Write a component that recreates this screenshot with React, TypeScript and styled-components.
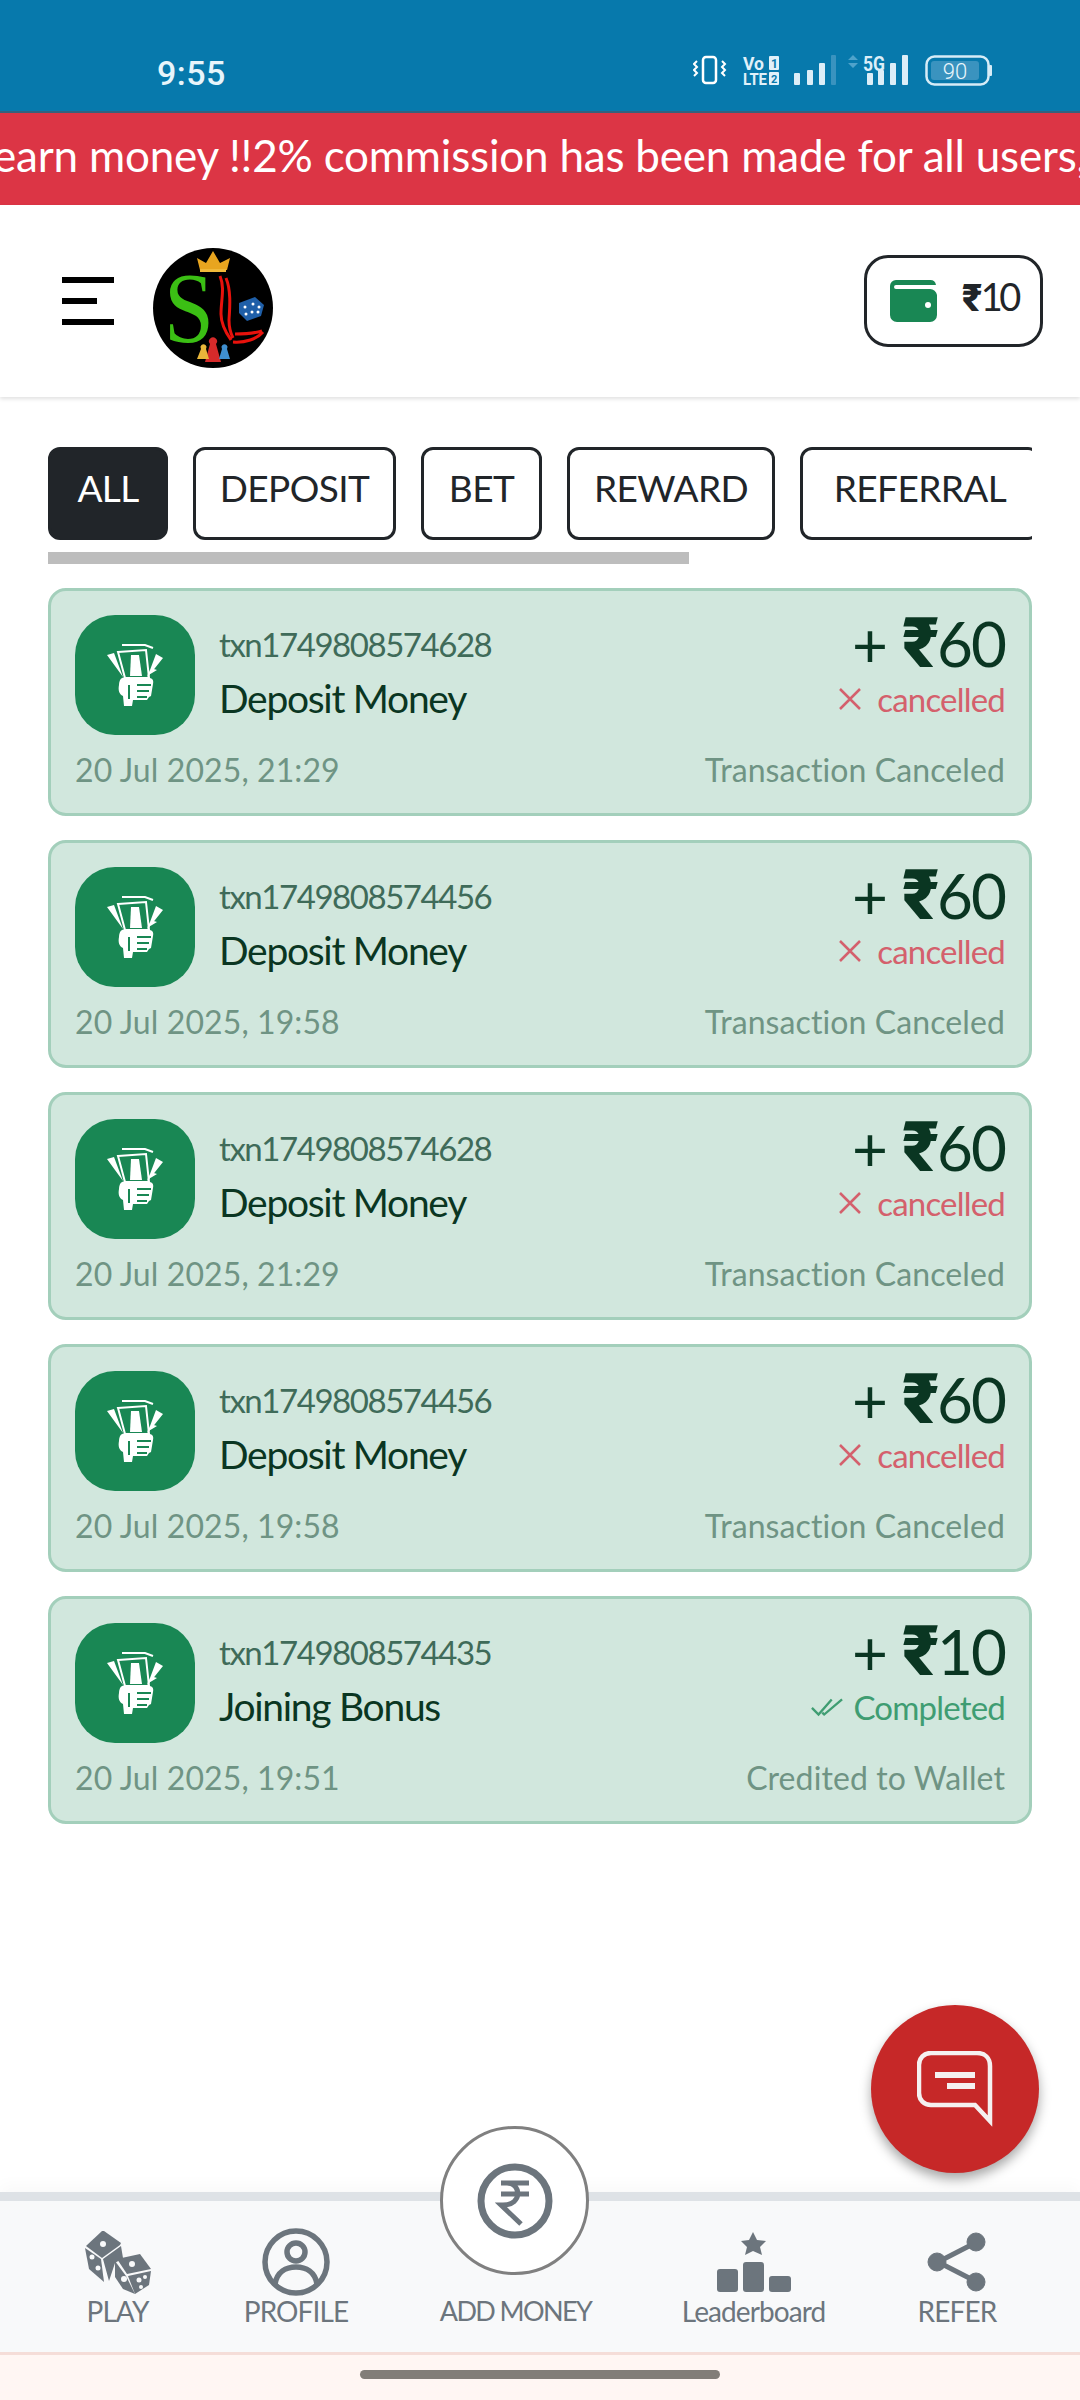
import React from 'react';
import styled, { createGlobalStyle } from 'styled-components';

const Global = createGlobalStyle`
  html, body { margin: 0; padding: 0; background: #fff; }
  * { box-sizing: border-box; }
  body { font-family: "Lato", "Liberation Sans", sans-serif; font-weight: 300; }
`;

const Page = styled.div`
  width: 1080px; height: 2400px; display: flex; flex-direction: column; position: relative; overflow: hidden; background: #fff;
`;
const StatusBar = styled.div`
  height: 113px; flex: none; background: #0779ac; display: flex; justify-content: space-between; align-items: flex-start;
  padding: 53px 87px 0 157px; color: #e8f5fb; box-shadow: inset 0 -2px 0 #35617c;
`;
const Clock = styled.span`
  font-family: "Roboto", sans-serif; font-weight: 500; font-size: 34px; line-height: 40px; letter-spacing: 0.5px;
`;
const Ticker = styled.div`
  height: 92px; flex: none; background: #dc3545; color: #fff; overflow: hidden; display: flex; align-items: center;
  font-size: 44px; font-weight: 400; white-space: nowrap; padding-bottom: 9px;
`;
const TickerText = styled.span`
  margin-left: -7px; letter-spacing: -0.2px;
`;
const Header = styled.header`
  height: 192px; flex: none; background: #fff; display: flex; align-items: center; justify-content: space-between;
  padding: 0 37px 0 62px; box-shadow: 0 2px 4px rgba(0,0,0,.12);
`;
const Left = styled.div`
  display: flex; align-items: center; gap: 39px;
`;
const Burger = styled.div`
  width: 52px; display: flex; flex-direction: column; gap: 15px; align-items: flex-start;
`;
const BurgerLine = styled.span<{ $w: number }>`
  display: block; height: 6px; width: ${p => p.$w}px; background: #000;
`;
const LogoMark = styled.svg`
  flex: none; margin-top: 14px;
`;
const WalletButton = styled.div`
  width: 179px; height: 92px; border: 3px solid #212529; border-radius: 24px; display: flex; align-items: center;
  gap: 25px; padding: 0 0 0 23px; color: #212529; font-size: 38px; font-weight: 400;
`;
const WalletAmount = styled.span`
  letter-spacing: -3.5px; margin-top: -10px;
`;
const Rupee = styled.b`
  font-family: "Roboto", "DejaVu Sans", sans-serif; font-weight: 900; margin-right: 2px;
`;
const AmountRupee = styled(Rupee)`
  font-size: 70px; margin-right: 0; line-height: 48px;
`;
const Main = styled.main`
  flex: 1; padding: 50px 48px 0; display: flex; flex-direction: column;
`;
const Tabs = styled.div`
  display: flex; gap: 25px; overflow: hidden; width: 984px;
`;
const Tab = styled.div<{ $active?: boolean; $w: number }>`
  flex: none; width: ${p => p.$w}px; height: 93px; border: 3px solid #212529; border-radius: 12px;
  background: ${p => (p.$active ? '#212529' : '#fff')}; color: ${p => (p.$active ? '#fff' : '#212529')};
  display: flex; align-items: center; justify-content: center; padding-bottom: 12px;
  font-size: 37px; letter-spacing: -0.6px; font-weight: 400; white-space: nowrap;
`;
const ScrollThumb = styled.div`
  width: 641px; height: 12px; background: #bdbdbd; margin: 12px 0 24px;
`;
const Cards = styled.div`
  display: flex; flex-direction: column; gap: 24px;
`;
const Card = styled.article`
  height: 228px; background: #d1e7dd; border: 3px solid #a3cfbb; border-radius: 18px; padding: 24px;
  display: flex; flex-direction: column; gap: 15px;
`;
const Row = styled.div`
  display: flex; justify-content: space-between; align-items: center;
`;
const Identity = styled.div`
  display: flex; align-items: center; gap: 24px;
`;
const IconTile = styled.div`
  width: 120px; height: 120px; border-radius: 40px; background: #198754; display: flex; align-items: center; justify-content: center;
`;
const TextCol = styled.div`
  display: flex; flex-direction: column; gap: 14px; margin-top: -8px;
`;
const TxnId = styled.div`
  font-size: 33px; line-height: 40px; color: #3f6b59; letter-spacing: -1.45px; font-weight: 400;
`;
const Title = styled.div`
  font-size: 39px; line-height: 40px; color: #0a3622; letter-spacing: -1.3px; font-weight: 400;
`;
const RightCol = styled.div`
  display: flex; flex-direction: column; align-items: flex-end; gap: 12px; margin-top: -13px;
`;
const Amount = styled.div`
  font-size: 62px; line-height: 48px; color: #0a3622; font-weight: 400; letter-spacing: -2px; display: flex; align-items: baseline; gap: 16px;
`;
const Status = styled.div<{ $ok?: boolean }>`
  font-size: 33px; line-height: 40px; color: ${p => (p.$ok ? '#3f9d72' : '#d4606c')}; letter-spacing: -0.8px;
  display: flex; align-items: center; gap: ${p => (p.$ok ? 10 : 16)}px; font-weight: 400;
`;
const Meta = styled.div`
  font-size: 32px; line-height: 40px; color: #6f9484; letter-spacing: 0.1px; font-weight: 400;
`;
const Nav = styled.nav`
  height: 160px; flex: none; background: #f8f9fa; border-top: 9px solid #dee2e6; display: flex; gap: 91px;
  padding: 27px 0 0 84px; position: relative; box-shadow: 0 -8px 14px rgba(0,0,0,.025);
`;
const NavItem = styled.div<{ $w: number }>`
  width: ${p => p.$w}px; flex: none; display: flex; flex-direction: column; align-items: center; position: relative;
  color: #6c757d;
`;
const NavIcon = styled.div`
  height: 67px; display: flex; align-items: center; justify-content: center;
`;
const NavLabel = styled.span<{ $tight?: boolean }>`
  font-size: ${p => (p.$tight ? 27 : 28)}px; line-height: 32px; white-space: nowrap;
  letter-spacing: ${p => (p.$tight ? -1.6 : -0.9)}px; font-weight: 400;
`;
const AddCircle = styled.div`
  position: absolute; left: -1px; top: -102px; width: 149px; height: 149px; border-radius: 50%; background: #fff;
  border: 3px solid #808080; display: flex; align-items: center; justify-content: center;
`;
const GestureArea = styled.div`
  height: 48px; flex: none; background: #fff6f3; border-top: 3px solid #f5ddd8; display: flex; justify-content: center; padding-top: 15px;
`;
const GestureBar = styled.div`
  width: 360px; height: 9px; border-radius: 5px; background: #827d78;
`;
const Fab = styled.div`
  position: absolute; left: 871px; top: 2005px; width: 168px; height: 168px; border-radius: 50%; background: #c62828;
  box-shadow: 0 6px 12px rgba(0,0,0,.35); display: flex; align-items: center; justify-content: center;
`;

const StatusIcons = () => (
  <svg width="300" height="34" viewBox="0 0 300 34" fill="none">
    <rect x="10" y="4" width="13" height="26" rx="3" stroke="#fff" strokeWidth="2.5" />
    <path d="M4 8l-3 3 3 3-3 3 3 3-3 3M29 8l3 3-3 3 3 3-3 3 3 3" stroke="#fff" strokeWidth="2" />
    <text x="50" y="17" fill="#e0f1fa" fontFamily="Roboto" fontWeight="700" fontSize="19" textLength="21" lengthAdjust="spacingAndGlyphs">Vo</text>
    <rect x="76" y="3" width="10" height="14" rx="1" fill="#e0f1fa" />
    <text x="78" y="15" fill="#0779ac" fontFamily="Roboto" fontWeight="700" fontSize="12">1</text>
    <text x="50" y="32" fill="#e0f1fa" fontFamily="Roboto" fontWeight="700" fontSize="17" textLength="24" lengthAdjust="spacingAndGlyphs">LTE</text>
    <rect x="76" y="19" width="10" height="13" rx="1" fill="#e0f1fa" />
    <text x="78" y="30" fill="#0779ac" fontFamily="Roboto" fontWeight="700" fontSize="11">2</text>
    <g fill="#dceef8">
      <rect x="101" y="20" width="6" height="12" rx="1" />
      <rect x="114" y="17" width="6" height="15" rx="1" />
      <rect x="126" y="10" width="6" height="22" rx="1" />
      <rect x="138" y="2" width="5" height="30" rx="1" fill="#3a93bf" />
      <rect x="174" y="20" width="6" height="12" rx="1" />
      <rect x="185" y="17" width="6" height="15" rx="1" />
      <rect x="197" y="10" width="6" height="22" rx="1" />
      <rect x="209" y="2" width="6" height="30" rx="1" />
    </g>
    <path d="M160 2l5 5h-10zM160 15l5-5h-10z" fill="#4fa3cb" />
    <text x="170" y="18" fill="#dceef8" fontFamily="Roboto" fontWeight="700" fontSize="20" textLength="22" lengthAdjust="spacingAndGlyphs">5G</text>
    <rect x="233.5" y="3.5" width="62" height="28" rx="8" stroke="#d6ecf7" strokeWidth="2.5" />
    <rect x="238" y="8" width="48" height="19" rx="3" fill="#3a93bf" />
    <rect x="296" y="12" width="3" height="11" rx="1" fill="#d6ecf7" />
    <text x="262" y="26" fill="#eaf6fc" fontFamily="Roboto" fontSize="22" textAnchor="middle">90</text>
  </svg>
);

const Logo = () => (
  <LogoMark width="120" height="120" viewBox="0 0 120 120">
    <circle cx="60" cy="60" r="60" fill="#000" />
    <path d="M47 22L44 10l9 5 7-12 7 12 10-5-3 12z" fill="#e8a51f" />
    <rect x="47" y="21" width="26" height="3" fill="#f0b93a" />
    <text x="11" y="93" fill="#3bbf14" fontFamily="Liberation Serif" fontSize="100" textLength="50" lengthAdjust="spacingAndGlyphs">S</text>
    <path d="M67 28c5 12 1 24 1 38 0 8 3 16 10 26M73 30c5 12 4 28 3 42 0 6 1 12 4 18" stroke="#e8120c" strokeWidth="3" fill="none" />
    <path d="M82 86c10 0 20-1 27-3M80 94c12 1 24-3 30-10" stroke="#e8120c" strokeWidth="3" fill="none" />
    <path d="M86 55l16-6 9 8-3 11-14 5-8-8z" fill="#1f5fa8" />
    <g fill="#fff"><circle cx="92" cy="59" r="1.5" /><circle cx="100" cy="56" r="1.5" /><circle cx="106" cy="59" r="1.5" /><circle cx="99" cy="64" r="1.5" /><circle cx="105" cy="64" r="1.5" /><circle cx="93" cy="66" r="1.5" /></g>
    <path d="M52 114l5-18a4 4 0 1 1 6 0l5 18z" fill="#d62a2a" />
    <path d="M44 111l4-10a3 3 0 1 1 5 0l3 10z" fill="#e9b63a" />
    <path d="M66 111l3-10a3 3 0 1 1 5 0l3 10z" fill="#3f8fd0" />
  </LogoMark>
);

const WalletIcon = () => (
  <svg width="47" height="42" viewBox="0 0 47 42">
    <path d="M6 0h34a6 6 0 0 1 6 5H6a2 2 0 0 0 0 4h34a7 7 0 0 1 7 6v20a7 7 0 0 1-7 7H7a7 7 0 0 1-7-7V6a6 6 0 0 1 6-6z" fill="#198754" />
    <circle cx="38" cy="25" r="3" fill="#fff" />
  </svg>
);

const CashIcon = () => (
  <svg width="56" height="62" viewBox="0 0 56 62" fill="none">
    <path d="M15 1h23l8 3" stroke="#fff" strokeWidth="2" />
    <path d="M11 8l28-2 3 28H18z" stroke="#fff" strokeWidth="2" />
    <path d="M24 11h8l3 21H23z" fill="#fff" />
    <path d="M0 11l7-2 9 24zM56 14l-7-4-9 24zM50 26l-6-2-4 8z" fill="#fff" />
    <path d="M15 34c4-2 9-1 12 1l15-1c3 0 5 2 4 6l-2 12-2 1-2 3H26l-1 6h-8l-1-10c-4-2-5-6-4-11 0-3 1-6 3-7z" fill="#fff" />
    <path d="M22 41v14M30 41h14M30 47h12M30 53h10" stroke="#198754" strokeWidth="2" />
  </svg>
);

const CrossIcon = () => (
  <svg width="22" height="22" viewBox="0 0 22 22"><path d="M1 1l20 20M21 1L1 21" stroke="#d4606c" strokeWidth="2.5" /></svg>
);
const DoubleCheck = () => (
  <svg width="32" height="22" viewBox="0 0 34 22" fill="none">
    <path d="M1 12l7 7L22 3M12 17l2 2L33 3" stroke="#3f9d72" strokeWidth="2.5" />
  </svg>
);

const DiceIcon = () => (
  <svg width="66" height="64" viewBox="0 0 66 64">
    <g fill="#6c757d">
      <path d="M1 16L17 1l2 0 17 12-1 2-18 13z" />
      <path d="M0 18l16 11 3 23-15-13z" />
      <path d="M18 29l18-13 2 12-8 5-6 18z" />
      <path d="M32 29l23-5 11 15-24 5z" />
      <path d="M30 31l11 15 9 18-12-5-8-12z" />
      <path d="M43 46l23-5-2 14-14 9z" />
    </g>
    <g fill="#f8f9fa">
      <circle cx="18" cy="14" r="3" /><circle cx="7" cy="27" r="2.5" /><circle cx="13" cy="38" r="2.5" />
      <circle cx="47" cy="34" r="3" /><circle cx="39" cy="49" r="3" /><circle cx="54" cy="50" r="2.5" /><circle cx="60" cy="47" r="2" /><circle cx="56" cy="57" r="2" />
    </g>
  </svg>
);
const ProfileIcon = () => (
  <svg width="68" height="68" viewBox="0 0 68 68" fill="none" stroke="#6c757d" strokeWidth="5.5">
    <circle cx="34" cy="34" r="31" />
    <circle cx="34" cy="24" r="9" />
    <path d="M13 56c2-12 11-17 21-17s19 5 21 17" />
  </svg>
);
const LeaderIcon = () => (
  <svg width="74" height="60" viewBox="0 0 74 60" fill="#6c757d">
    <path d="M36 0l4 8 9 1-6 6 2 8-9-4-8 4 2-8-6-6 8-1z" />
    <rect x="0" y="37" width="21" height="23" rx="3" />
    <rect x="26" y="30" width="21" height="30" rx="3" />
    <rect x="52" y="44" width="22" height="16" rx="3" />
  </svg>
);
const ShareIcon = () => (
  <svg width="60" height="60" viewBox="0 0 60 60" fill="#6c757d" stroke="#6c757d">
    <path d="M48 11L11 30l37 19" fill="none" strokeWidth="5" />
    <circle cx="49" cy="10" r="9" /><circle cx="10" cy="30" r="9" /><circle cx="49" cy="50" r="9" />
  </svg>
);
const RupeeCircle = () => (
  <svg width="76" height="76" viewBox="0 0 76 76" fill="none" stroke="#6c757d">
    <circle cx="38" cy="38" r="34" strokeWidth="7" />
    <path d="M24 20h28M24 31h28M30 20c14 0 16 22-4 22h-2l20 19" strokeWidth="5" />
  </svg>
);
const ChatIcon = () => (
  <svg width="76" height="76" viewBox="0 0 76 76" fill="none" stroke="#f5f0f0">
    <path d="M14 2h46c8 0 13 5 13 13v55L58 54H14C7 54 2 49 2 42V14C2 7 7 2 14 2z" strokeWidth="4.5" />
    <path d="M18 24h40" strokeWidth="6" />
    <path d="M30 35h28" strokeWidth="6" />
  </svg>
);

type Tx = { id: string; title: string; date: string; amount: string; status: string; note: string; ok?: boolean };
const txns: Tx[] = [
  { id: 'txn1749808574628', title: 'Deposit Money', date: '20 Jul 2025, 21:29', amount: '60', status: 'cancelled', note: 'Transaction Canceled' },
  { id: 'txn1749808574456', title: 'Deposit Money', date: '20 Jul 2025, 19:58', amount: '60', status: 'cancelled', note: 'Transaction Canceled' },
  { id: 'txn1749808574628', title: 'Deposit Money', date: '20 Jul 2025, 21:29', amount: '60', status: 'cancelled', note: 'Transaction Canceled' },
  { id: 'txn1749808574456', title: 'Deposit Money', date: '20 Jul 2025, 19:58', amount: '60', status: 'cancelled', note: 'Transaction Canceled' },
  { id: 'txn1749808574435', title: 'Joining Bonus', date: '20 Jul 2025, 19:51', amount: '10', status: 'Completed', note: 'Credited to Wallet', ok: true },
];
const tabs = [
  { label: 'ALL', w: 120, active: true },
  { label: 'DEPOSIT', w: 203 },
  { label: 'BET', w: 121 },
  { label: 'REWARD', w: 208 },
  { label: 'REFERRAL', w: 240 },
];

export default function App() {
  return (
    <Page>
      <Global />
      <StatusBar>
        <Clock>9:55</Clock>
        <StatusIcons />
      </StatusBar>
      <Ticker><TickerText>earn money !!2% commission has been made for all users,</TickerText></Ticker>
      <Header>
        <Left>
          <Burger>
            <BurgerLine $w={52} /><BurgerLine $w={35} /><BurgerLine $w={52} />
          </Burger>
          <Logo />
        </Left>
        <WalletButton>
          <WalletIcon />
          <WalletAmount><Rupee>₹</Rupee>10</WalletAmount>
        </WalletButton>
      </Header>
      <Main>
        <Tabs>
          {tabs.map(t => <Tab key={t.label} $w={t.w} $active={t.active}>{t.label}</Tab>)}
        </Tabs>
        <ScrollThumb />
        <Cards>
          {txns.map((t, i) => (
            <Card key={i}>
              <Row>
                <Identity>
                  <IconTile><CashIcon /></IconTile>
                  <TextCol>
                    <TxnId>{t.id}</TxnId>
                    <Title>{t.title}</Title>
                  </TextCol>
                </Identity>
                <RightCol>
                  <Amount><span>+</span><span><AmountRupee>₹</AmountRupee>{t.amount}</span></Amount>
                  <Status $ok={t.ok}>{t.ok ? <DoubleCheck /> : <CrossIcon />}{t.status}</Status>
                </RightCol>
              </Row>
              <Row>
                <Meta>{t.date}</Meta>
                <Meta>{t.note}</Meta>
              </Row>
            </Card>
          ))}
        </Cards>
      </Main>
      <Nav>
        <NavItem $w={67}><NavIcon><DiceIcon /></NavIcon><NavLabel>PLAY</NavLabel></NavItem>
        <NavItem $w={108}><NavIcon><ProfileIcon /></NavIcon><NavLabel>PROFILE</NavLabel></NavItem>
        <NavItem $w={149}>
          <AddCircle><RupeeCircle /></AddCircle>
          <NavIcon />
          <NavLabel $tight>ADD MONEY</NavLabel>
        </NavItem>
        <NavItem $w={145}><NavIcon><LeaderIcon /></NavIcon><NavLabel>Leaderboard</NavLabel></NavItem>
        <NavItem $w={80}><NavIcon><ShareIcon /></NavIcon><NavLabel>REFER</NavLabel></NavItem>
      </Nav>
      <GestureArea><GestureBar /></GestureArea>
      <Fab><ChatIcon /></Fab>
    </Page>
  );
}
